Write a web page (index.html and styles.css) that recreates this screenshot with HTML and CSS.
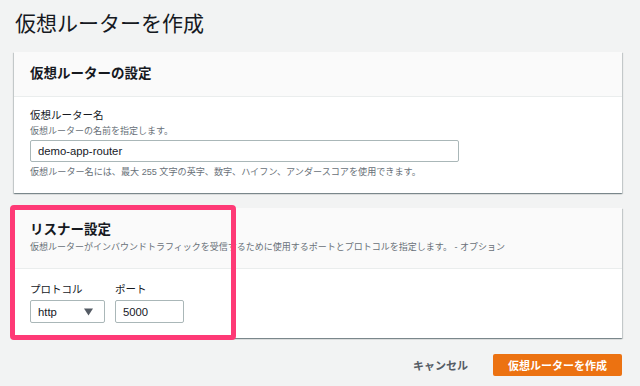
FILE: index.html
```html
<!DOCTYPE html>
<html lang="ja">
<head>
    <meta charset="UTF-8">
    <title>仮想ルーターを作成</title>
    <link rel="stylesheet" href="styles.css">
</head>
<body>
    <h1 class="page-title">仮想ルーターを作成</h1>

    <!-- 仮想ルーターの設定 -->
    <section class="card">
        <div class="card-header">
            <h2 class="card-title">仮想ルーターの設定</h2>
        </div>
        <div class="card-body">
            <div class="field-label">仮想ルーター名</div>
            <div class="field-desc">仮想ルーターの名前を指定します。</div>
            <input class="text-input name-input" type="text" value="demo-app-router">
            <div class="field-hint">仮想ルーター名には、最大 255 文字の英字、数字、ハイフン、アンダースコアを使用できます。</div>
        </div>
    </section>

    <!-- リスナー設定 -->
    <section class="card listener-card">
        <div class="card-header">
            <h2 class="card-title">リスナー設定</h2>
            <div class="field-desc">仮想ルーターがインバウンドトラフィックを受信するために使用するポートとプロトコルを指定します。 - オプション</div>
        </div>
        <div class="card-body listener-body">
            <div class="field">
                <div class="field-label">プロトコル</div>
                <div class="select-box">
                    <span>http</span>
                    <svg class="select-arrow" width="9" height="8" viewBox="0 0 9 8"><path d="M0 0.5h9L4.5 7.5z" fill="#545b64"/></svg>
                </div>
            </div>
            <div class="field">
                <div class="field-label">ポート</div>
                <input class="text-input port-input" type="text" value="5000">
            </div>
        </div>
        <div class="highlight"></div>
    </section>

    <div class="actions">
        <button class="btn-cancel">キャンセル</button>
        <button class="btn-primary">仮想ルーターを作成</button>
    </div>
</body>
</html>
```

FILE: styles.css
```css
/* 全体 */
body {
    margin: 0;
    padding: 0 18px 0 14px;
    background-color: #f2f3f3;
    font-family: "Liberation Sans", "Noto Sans CJK JP", sans-serif;
    color: #16191f;
}

.page-title {
    margin: 10px 0 14px 1px;
    font-size: 21px;
    line-height: 28px;
    font-weight: 400;
    color: #16191f;
}

/* カード */
.card {
    position: relative;
    background-color: #fff;
    box-shadow: 0 1px 1px 0 rgba(0, 28, 36, 0.3), 1px 1px 1px 0 rgba(0, 28, 36, 0.15), -1px 1px 1px 0 rgba(0, 28, 36, 0.15);
    margin-bottom: 15px;
}

.card-header {
    background-color: #fafafa;
    border-bottom: 1px solid #eaeded;
    padding: 12px 16px 12px;
}

.card-title {
    margin: 0;
    font-size: 13.5px;
    line-height: 20px;
    font-weight: 700;
}

.card-body {
    padding: 10px 16px 13px;
}

/* フォーム */
.field-label {
    font-size: 10.5px;
    line-height: 17px;
}

.field-desc {
    font-size: 9px;
    line-height: 15px;
    color: #687078;
}

.field-hint {
    margin-top: 2px;
    font-size: 9.1px;
    line-height: 16px;
    color: #687078;
}

.text-input {
    box-sizing: border-box;
    height: 22px;
    margin-top: 1px;
    padding: 0 7px;
    border: 1px solid #aab7b8;
    border-radius: 2px;
    font-family: "Liberation Sans", sans-serif;
    font-size: 11.3px;
    color: #16191f;
    background: #fff;
}

.name-input {
    width: 429px;
}

/* リスナー */
.listener-card .card-header {
    padding: 12px 16px 13px;
}

.listener-body {
    display: flex;
    gap: 10px;
    padding: 12px 16px 15px;
}

.listener-body .field-label {
    margin-bottom: 2px;
}

.select-box {
    box-sizing: border-box;
    display: flex;
    justify-content: space-between;
    align-items: center;
    width: 75px;
    height: 23px;
    padding: 0 11px 0 7px;
    border: 1px solid #aab7b8;
    border-radius: 2px;
    font-size: 11.3px;
    background: #fff;
}

.select-arrow {
    display: block;
}

.port-input {
    width: 69px;
    height: 23px;
    margin-top: 0;
}

/* 赤枠の強調 */
.highlight {
    position: absolute;
    left: -4px;
    top: -3px;
    width: 226px;
    height: 135px;
    box-sizing: border-box;
    border: 5px solid #fe3a76;
    border-radius: 4px;
}

/* ボタン */
.actions {
    display: flex;
    justify-content: flex-end;
    align-items: center;
    gap: 25px;
    margin-top: 16px;
}

button {
    font-family: "Liberation Sans", "Noto Sans CJK JP", sans-serif;
    font-size: 11px;
    font-weight: 700;
    border: none;
    cursor: pointer;
}

.btn-cancel {
    background: none;
    color: #545b64;
    padding: 0;
}

.btn-primary {
    width: 129px;
    height: 22px;
    background-color: #ec7211;
    color: #fff;
    border-radius: 2px;
}
```
